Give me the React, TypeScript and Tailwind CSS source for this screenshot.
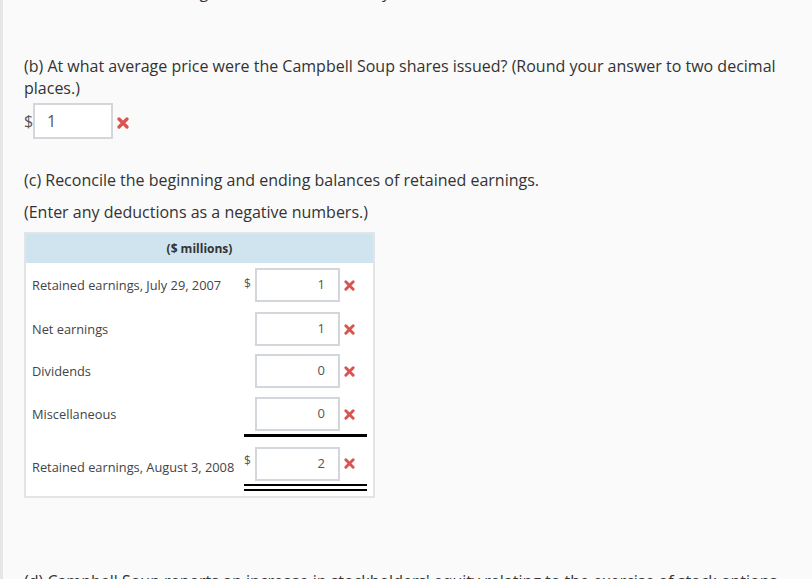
import React from "react";

const XMark = ({ size = 11 }: { size?: number }) => (
  <svg width={size} height={size} viewBox="0 0 12 12" className="shrink-0">
    <path d="M2 2 L10 10 M10 2 L2 10" stroke="#d9534f" strokeWidth="3.2" strokeLinecap="round" />
  </svg>
);

type Row = { label: string; value: string; dollar?: boolean; mt: string };

const Input = ({ value }: { value: string }) => (
  <div className="w-[85px] h-[34px] border-2 border-[#d3d7db] bg-white flex items-center justify-end pr-[13px] text-[13px] text-[#555]">
    {value}
  </div>
);

export default function App() {
  const rows: Row[] = [
    { label: "Retained earnings, July 29, 2007", value: "1", dollar: true, mt: "mt-[5px]" },
    { label: "Net earnings", value: "1", mt: "mt-[10px]" },
    { label: "Dividends", value: "0", mt: "mt-[8px]" },
    { label: "Miscellaneous", value: "0", mt: "mt-[9px]" },
  ];
  return (
    <div
      className="w-[812px] h-[579px] overflow-hidden bg-[#fafafa] border-l-[3px] border-[#e6e6e6] text-[#333]"
      style={{ fontFamily: "'Open Sans', 'Liberation Sans', sans-serif" }}
    >
      <div className="pl-[21px]">
        <p className="text-[16px] leading-[22px] mt-[-19px] pr-[20px] whitespace-nowrap overflow-hidden">
          shares were outstanding at the end of the fiscal year?
        </p>
        <p className="text-[16px] leading-[22px] mt-[52px] pr-[20px]">
          (b) At what average price were the Campbell Soup shares issued? (Round your answer to two decimal places.)
        </p>
        <div className="flex items-center mt-[4px] h-[36px]">
          <span className="text-[16px] w-[9px] text-[#555]">$</span>
          <div className="w-[80px] h-[36px] border-2 border-[#d3d7db] bg-white flex items-center pl-[12px] text-[16px] text-[#555]">
            1
          </div>
          <span className="ml-[4px] mt-[3px]">
            <XMark size={12} />
          </span>
        </div>
        <p className="text-[16px] leading-[22px] mt-[30px]">
          (c) Reconcile the beginning and ending balances of retained earnings.
        </p>
        <p className="text-[16px] leading-[22px] mt-[10px]">(Enter any deductions as a negative numbers.)</p>

        <div className="mt-[9px] w-[351px] border-2 border-[#e2e4e6] bg-white">
          <div className="h-[29px] bg-[#cfe4ee] flex items-center justify-center text-[12px] font-bold text-[#333]">
            ($ millions)
          </div>
          <div className="pl-[6px] pr-[6px] pb-[5px]">
            {rows.map((r, i) => (
              <div key={i} className={`flex items-center h-[34px] ${r.mt}`}>
                <div className="w-[212px] text-[12.8px] text-[#444] pt-[1px]">{r.label}</div>
                <div className="w-[123px] flex items-center">
                  <span className="w-[11px] text-[12px] text-[#555] mt-[-3px]">{r.dollar ? "$" : ""}</span>
                  <Input value={r.value} />
                  <span className="ml-[4px]">
                    <XMark />
                  </span>
                </div>
              </div>
            ))}
            <div className="flex">
              <div className="w-[212px]" />
              <div className="w-[123px] h-[3px] bg-black mt-[3px]" />
            </div>
            <div className="flex items-center h-[33px] mt-[10px]">
              <div className="w-[212px] text-[12.8px] text-[#444] pt-[8px]">Retained earnings, August 3, 2008</div>
              <div className="w-[123px] flex items-center">
                <span className="w-[11px] text-[12px] text-[#555] mt-[-6px]">$</span>
                <Input value="2" />
                <span className="ml-[4px]">
                  <XMark />
                </span>
              </div>
            </div>
            <div className="flex">
              <div className="w-[212px]" />
              <div className="w-[123px]">
                <div className="h-[2px] bg-black mt-[4px]" />
                <div className="h-[2px] bg-black mt-[3px]" />
              </div>
            </div>
          </div>
        </div>

        <p className="text-[16px] leading-[22px] mt-[72px] whitespace-nowrap">
          (d) Campbell Soup reports an increase in stockholders' equity relating to the exercise of stock options
        </p>
      </div>
    </div>
  );
}
